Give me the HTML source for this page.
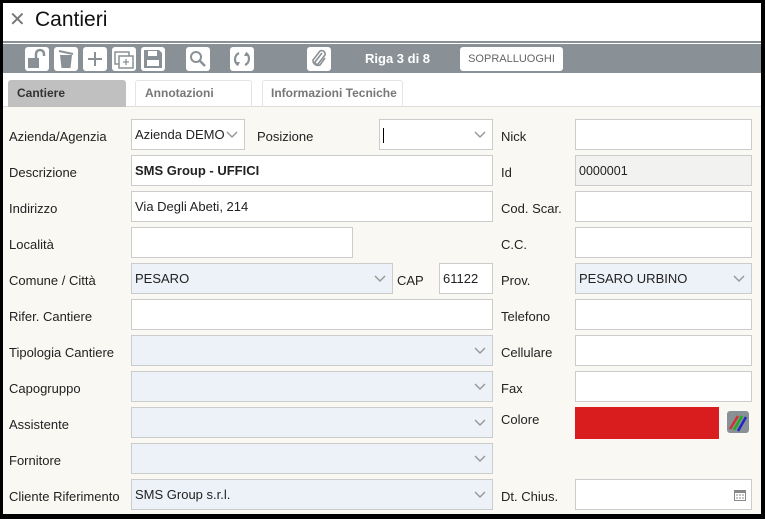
<!DOCTYPE html>
<html><head><meta charset="utf-8">
<style>
*{box-sizing:border-box;margin:0;padding:0}
body{width:765px;height:519px;background:#000;position:relative;overflow:hidden;font-family:"Liberation Sans",Arial,sans-serif;}
#w{position:absolute;left:3px;top:3px;width:758px;height:511px;background:#fff;overflow:hidden}
.a{position:absolute}
.lbl{position:absolute;font-size:13px;color:#222;}
.in{position:absolute;height:31px;background:#fff;border:1px solid #ccc;font-size:13px;color:#222;padding:0 3px;line-height:30px;}
.sel{background:#edf1f8;}
.chev{position:absolute;right:6px;top:11px;width:12px;height:8px}
.tb{position:absolute;top:44px;width:24px;height:24px;background:#fff;border-radius:3px}
</style></head><body>
<div id="w">
 <div class="a" style="left:6px;top:4px;font-size:20px;color:#777">✕</div>
 <div class="a" style="left:32px;top:5px;font-size:21px;color:#111">Cantieri</div>
 <div class="a" style="left:0;top:38px;width:758px;height:2px;background:#8a9196"></div>
 <div class="a" style="left:0;top:41px;width:758px;height:29px;background:#8a9196"></div>
 <div class="tb" style="left:22px"><svg width="24" height="24"><rect x="3" y="11" width="11" height="10" fill="#8a9196"/><path d="M11 11V7a4 4 0 0 1 8 0v2" stroke="#8a9196" stroke-width="2.5" fill="none"/></svg></div>
 <div class="tb" style="left:51px"><svg width="24" height="24"><path d="M6 8h12l-1.5 13h-9z" fill="#8a9196"/><path d="M5 4l14 3" stroke="#8a9196" stroke-width="2"/></svg></div>
 <div class="tb" style="left:80px"><svg width="24" height="24"><path d="M12 5v14M5 12h14" stroke="#8a9196" stroke-width="2"/></svg></div>
 <div class="tb" style="left:109px"><svg width="24" height="24"><rect x="3" y="5" width="14" height="12" fill="none" stroke="#8a9196" stroke-width="1.5"/><rect x="7" y="9" width="14" height="12" fill="#fff" stroke="#8a9196" stroke-width="1.5"/><path d="M14 12v6M11 15h6" stroke="#8a9196" stroke-width="1.3"/></svg></div>
 <div class="tb" style="left:138px"><svg width="24" height="24"><path d="M3 3h15l3 3v15H3z" fill="#8a9196"/><rect x="7" y="4" width="9" height="5" fill="#fff"/><rect x="6" y="13" width="12" height="6" fill="#fff"/></svg></div>
 <div class="tb" style="left:183px"><svg width="24" height="24"><circle cx="10" cy="10" r="5" fill="none" stroke="#8a9196" stroke-width="2"/><path d="M14 14l5 5" stroke="#8a9196" stroke-width="2.5"/></svg></div>
 <div class="tb" style="left:227px"><svg width="24" height="24"><path d="M9 6a7 7 0 0 0-1 12M15 18a7 7 0 0 0 1-12" stroke="#8a9196" stroke-width="2.2" fill="none"/><path d="M5 15l3 4 2-4zM19 9l-3-4-2 4z" fill="#8a9196"/></svg></div>
 <div class="tb" style="left:304px"><svg width="24" height="24"><path d="M15 6l-7 9a2 2 0 0 0 3 2l7-9a3.5 3.5 0 0 0-5-4l-7 9a5 5 0 0 0 7 5l5-7" stroke="#8a9196" stroke-width="1.6" fill="none"/></svg></div>
 <div class="a" style="left:362px;top:48px;font-size:13px;font-weight:bold;color:#fff">Riga 3 di 8</div>
 <div class="a" style="left:457px;top:44px;width:103px;height:24px;background:#fff;border-radius:3px;font-size:11px;color:#666;text-align:center;line-height:24px">SOPRALLUOGHI</div>
 <div class="a" style="left:0;top:103px;width:758px;height:1px;background:#ddd"></div>
 <div class="a" style="left:5px;top:77px;width:118px;height:27px;background:#c0c0c0;border-radius:3px 3px 0 0;font-size:12px;font-weight:bold;color:#333;padding:6px 0 0 9px">Cantiere</div>
 <div class="a" style="left:132px;top:77px;width:117px;height:27px;border:1px solid #e4e4e4;border-bottom:none;border-radius:3px 3px 0 0;font-size:12px;font-weight:bold;color:#777;padding:5px 0 0 9px">Annotazioni</div>
 <div class="a" style="left:259px;top:77px;width:141px;height:27px;border:1px solid #e4e4e4;border-bottom:none;border-radius:3px 3px 0 0;font-size:12px;font-weight:bold;color:#777;padding:5px 0 0 8px">Informazioni Tecniche</div>
 <div class="a" style="left:0;top:104px;width:758px;height:407px;background:#f9f8f3"></div>

 <div class="lbl" style="left:6px;top:126px">Azienda/Agenzia</div>
 <div class="in" style="left:128px;top:116px;width:114px">Azienda DEMO<svg class="chev" viewBox="0 0 12 8"><path d="M1 1l5 5 5-5" stroke="#999" stroke-width="1.5" fill="none"/></svg></div>
 <div class="lbl" style="left:254px;top:126px">Posizione</div>
 <div class="in" style="left:376px;top:116px;width:114px"><div class="a" style="left:3px;top:8px;width:1px;height:15px;background:#000"></div><svg class="chev" viewBox="0 0 12 8"><path d="M1 1l5 5 5-5" stroke="#999" stroke-width="1.5" fill="none"/></svg></div>

 <div class="lbl" style="left:6px;top:162px">Descrizione</div>
 <div class="in" style="left:128px;top:152px;width:362px;font-weight:bold">SMS Group - UFFICI</div>
 <div class="lbl" style="left:6px;top:198px">Indirizzo</div>
 <div class="in" style="left:128px;top:188px;width:362px">Via Degli Abeti, 214</div>
 <div class="lbl" style="left:6px;top:234px">Località</div>
 <div class="in" style="left:128px;top:224px;width:222px"></div>
 <div class="lbl" style="left:6px;top:270px">Comune / Città</div>
 <div class="in sel" style="left:128px;top:260px;width:262px">PESARO<svg class="chev" viewBox="0 0 12 8"><path d="M1 1l5 5 5-5" stroke="#999" stroke-width="1.5" fill="none"/></svg></div>
 <div class="lbl" style="left:394px;top:270px">CAP</div>
 <div class="in" style="left:436px;top:260px;width:54px">61122</div>
 <div class="lbl" style="left:6px;top:306px">Rifer. Cantiere</div>
 <div class="in" style="left:128px;top:296px;width:362px"></div>
 <div class="lbl" style="left:6px;top:342px">Tipologia Cantiere</div>
 <div class="in sel" style="left:128px;top:332px;width:362px"><svg class="chev" viewBox="0 0 12 8"><path d="M1 1l5 5 5-5" stroke="#999" stroke-width="1.5" fill="none"/></svg></div>
 <div class="lbl" style="left:6px;top:378px">Capogruppo</div>
 <div class="in sel" style="left:128px;top:368px;width:362px"><svg class="chev" viewBox="0 0 12 8"><path d="M1 1l5 5 5-5" stroke="#999" stroke-width="1.5" fill="none"/></svg></div>
 <div class="lbl" style="left:6px;top:414px">Assistente</div>
 <div class="in sel" style="left:128px;top:404px;width:362px"><svg class="chev" viewBox="0 0 12 8"><path d="M1 1l5 5 5-5" stroke="#999" stroke-width="1.5" fill="none"/></svg></div>
 <div class="lbl" style="left:6px;top:450px">Fornitore</div>
 <div class="in sel" style="left:128px;top:440px;width:362px"><svg class="chev" viewBox="0 0 12 8"><path d="M1 1l5 5 5-5" stroke="#999" stroke-width="1.5" fill="none"/></svg></div>
 <div class="lbl" style="left:6px;top:486px">Cliente Riferimento</div>
 <div class="in sel" style="left:128px;top:476px;width:362px">SMS Group s.r.l.<svg class="chev" viewBox="0 0 12 8"><path d="M1 1l5 5 5-5" stroke="#999" stroke-width="1.5" fill="none"/></svg></div>

 <div class="lbl" style="left:498px;top:126px">Nick</div>
 <div class="in" style="left:572px;top:116px;width:177px"></div>
 <div class="lbl" style="left:498px;top:162px">Id</div>
 <div class="in" style="left:572px;top:152px;width:177px;background:#f2f2f0;font-size:12.5px">0000001</div>
 <div class="lbl" style="left:498px;top:198px">Cod. Scar.</div>
 <div class="in" style="left:572px;top:188px;width:177px"></div>
 <div class="lbl" style="left:498px;top:234px">C.C.</div>
 <div class="in" style="left:572px;top:224px;width:177px"></div>
 <div class="lbl" style="left:498px;top:270px">Prov.</div>
 <div class="in sel" style="left:572px;top:260px;width:177px">PESARO URBINO<svg class="chev" viewBox="0 0 12 8"><path d="M1 1l5 5 5-5" stroke="#999" stroke-width="1.5" fill="none"/></svg></div>
 <div class="lbl" style="left:498px;top:306px">Telefono</div>
 <div class="in" style="left:572px;top:296px;width:177px"></div>
 <div class="lbl" style="left:498px;top:342px">Cellulare</div>
 <div class="in" style="left:572px;top:332px;width:177px"></div>
 <div class="lbl" style="left:498px;top:378px">Fax</div>
 <div class="in" style="left:572px;top:368px;width:177px"></div>
 <div class="lbl" style="left:498px;top:409px">Colore</div>
 <div class="a" style="left:572px;top:404px;width:144px;height:32px;background:#d91d1f"></div>
 <div class="a" style="left:724px;top:408px;width:22px;height:22px;background:#8a9196;border-radius:3px">
  <svg width="22" height="22"><path d="M3 18L11 5" stroke="#c33" stroke-width="2.5"/><path d="M7 19L15 5" stroke="#2a2" stroke-width="2.5"/><path d="M11 20L19 6" stroke="#22c" stroke-width="2.5"/></svg></div>
 <div class="lbl" style="left:498px;top:486px">Dt. Chius.</div>
 <div class="in" style="left:572px;top:476px;width:177px"><svg class="a" style="right:5px;top:10px" width="12" height="11"><rect x="0.5" y="0.5" width="11" height="10" fill="none" stroke="#888"/><rect x="0" y="0" width="12" height="3" fill="#888"/><path d="M2 5h2M5 5h2M8 5h2M2 8h2M5 8h2M8 8h2" stroke="#888"/></svg></div>
</div>
</body></html>
